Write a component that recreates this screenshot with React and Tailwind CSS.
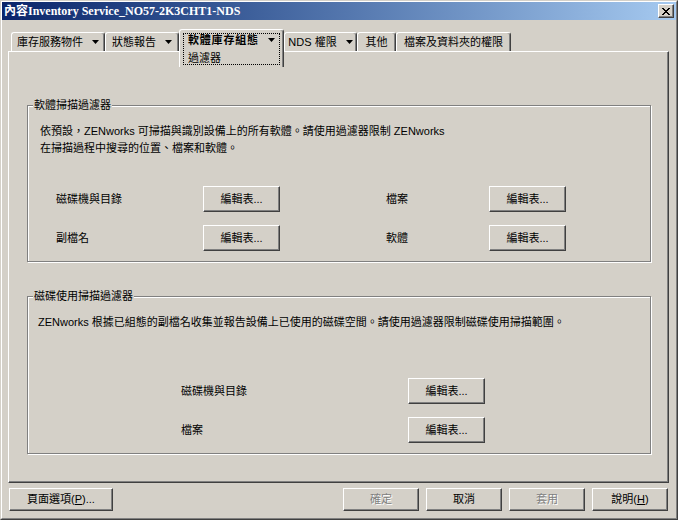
import React from 'react'

const Arrow = () => (
    <svg width="7" height="4" viewBox="0 0 7 4" className="shrink-0">
        <path d="M0 0h7L3.5 4z" fill="#000" />
    </svg>
)

// pixel X used by the title bar close button
const CloseGlyph = () => (
    <svg width="8" height="7" viewBox="0 0 8 7" shapeRendering="crispEdges">
        <rect x="0" y="0" width="2" height="1" fill="#000" />
        <rect x="6" y="0" width="2" height="1" fill="#000" />
        <rect x="1" y="1" width="2" height="1" fill="#000" />
        <rect x="5" y="1" width="2" height="1" fill="#000" />
        <rect x="2" y="2" width="4" height="1" fill="#000" />
        <rect x="3" y="3" width="2" height="1" fill="#000" />
        <rect x="2" y="4" width="4" height="1" fill="#000" />
        <rect x="1" y="5" width="2" height="1" fill="#000" />
        <rect x="5" y="5" width="2" height="1" fill="#000" />
        <rect x="0" y="6" width="2" height="1" fill="#000" />
        <rect x="6" y="6" width="2" height="1" fill="#000" />
    </svg>
)

const Btn = ({ className, disabled, children }) => (
    <div
        className={
            'flex items-center justify-center bg-[#d4d0c8] border border-white border-r-[#404040] border-b-[#404040] shadow-[inset_-1px_-1px_0_#808080] ' +
            className +
            (disabled ? ' text-[#808080] [text-shadow:1px_1px_0_#fff]' : '')
        }
    >
        {children}
    </div>
)

const Tab = ({ className, children }) => (
    <div
        className={
            'h-[19px] flex items-center justify-center gap-[9px] border-t border-l border-white border-r border-r-[#404040] rounded-t-[3px] shadow-[inset_-1px_0_0_#808080] leading-[17px] whitespace-nowrap ' +
            className
        }
    >
        {children}
    </div>
)

const GroupBox = ({ title, className, children }) => (
    <div
        className={
            'relative ml-[18px] w-[624px] border border-[#808080] shadow-[inset_1px_1px_0_#fff,1px_1px_0_#fff] ' +
            className
        }
    >
        <span className="absolute left-[5px] top-[-8px] px-[1px] bg-[#d4d0c8] leading-[15px]">{title}</span>
        {children}
    </div>
)

const App = () => {
    return (
        <div className="w-[678px] h-[520px] bg-[#d4d0c8] border border-[#d4d0c8] border-r-[#404040] border-b-[#404040] text-[11px] text-black font-['Liberation_Sans','Noto_Sans_CJK_TC',sans-serif]">
            <div className="h-full flex flex-col border border-white border-r-[#808080] border-b-[#808080]">
                {/* title bar */}
                <div className="h-[18px] shrink-0 flex items-center justify-between bg-linear-to-r from-[#0a246a] to-[#a6caf0]">
                    <span className="pl-[2px] text-white font-bold text-[12px] leading-none font-['Liberation_Serif','Noto_Sans_CJK_TC',serif] whitespace-nowrap">
                        內容Inventory Service_NO57-2K3CHT1-NDS
                    </span>
                    <Btn className="w-[16px] h-[14px] mr-[2px]">
                        <CloseGlyph />
                    </Btn>
                </div>

                <div className="flex-1 flex flex-col pl-[6px] pr-[7px]">
                    {/* tabs */}
                    <div className="mt-[9px] flex items-end pl-[3px]">
                        <Tab className="w-[94px]">
                            <span>庫存服務物件</span>
                            <Arrow />
                        </Tab>
                        <Tab className="w-[74px]">
                            <span>狀態報告</span>
                            <Arrow />
                        </Tab>
                        <div className="relative z-10 w-[105px] h-[38px] mb-[-16px] bg-[#d4d0c8] border-t border-l border-white border-r border-r-[#404040] rounded-t-[3px] shadow-[inset_-1px_0_0_#808080] pl-[8px] pt-[1px] leading-[18px] whitespace-nowrap">
                            <div className="flex items-center gap-[9px]">
                                <span className="font-bold tracking-[0.8px]">軟體庫存組態</span>
                                <Arrow />
                            </div>
                            <div>過濾器</div>
                            <span className="absolute left-[3px] top-[3px] w-[97px] h-[32px] border border-dotted border-black" />
                        </div>
                        <Tab className="w-[73px]">
                            <span>NDS 權限</span>
                            <Arrow />
                        </Tab>
                        <Tab className="w-[39px]">其他</Tab>
                        <Tab className="w-[115px]">檔案及資料夾的權限</Tab>
                    </div>

                    {/* tab page */}
                    <div className="h-[432px] flex flex-col border border-white border-r-[#404040] border-b-[#404040] shadow-[inset_-1px_-1px_0_#808080]">
                        <GroupBox title="軟體掃描過濾器" className="mt-[53px] h-[157px]">
                            <div className="pl-[12px] pt-[17px] leading-[17px] whitespace-nowrap">
                                依預設，ZENworks 可掃描與識別設備上的所有軟體。請使用過濾器限制 ZENworks
                                <br />
                                在掃描過程中搜尋的位置、檔案和軟體。
                            </div>
                            <div className="mt-[29px] flex items-center pl-[28px]">
                                <span className="w-[147px]">磁碟機與目錄</span>
                                <Btn className="w-[77px] h-[26px]">編輯表...</Btn>
                                <span className="ml-[106px] w-[103px]">檔案</span>
                                <Btn className="w-[77px] h-[26px]">編輯表...</Btn>
                            </div>
                            <div className="mt-[13px] flex items-center pl-[28px]">
                                <span className="w-[147px]">副檔名</span>
                                <Btn className="w-[77px] h-[26px]">編輯表...</Btn>
                                <span className="ml-[106px] w-[103px]">軟體</span>
                                <Btn className="w-[77px] h-[26px]">編輯表...</Btn>
                            </div>
                        </GroupBox>

                        <GroupBox title="磁碟使用掃描過濾器" className="mt-[34px] h-[158px]">
                            <div className="pl-[10px] pt-[17px] leading-[17px] whitespace-nowrap">
                                ZENworks 根據已組態的副檔名收集並報告設備上已使用的磁碟空間。請使用過濾器限制磁碟使用掃描範圍。
                            </div>
                            <div className="mt-[47px] flex items-center pl-[153px]">
                                <span className="w-[227px]">磁碟機與目錄</span>
                                <Btn className="w-[77px] h-[26px]">編輯表...</Btn>
                            </div>
                            <div className="mt-[13px] flex items-center pl-[153px]">
                                <span className="w-[227px]">檔案</span>
                                <Btn className="w-[77px] h-[26px]">編輯表...</Btn>
                            </div>
                        </GroupBox>
                    </div>

                    {/* dialog buttons */}
                    <div className="mt-[5px] flex justify-between pl-[1px] pr-[1px]">
                        <Btn className="w-[104px] h-[23px]">
                            頁面選項(<span className="underline">P</span>)...
                        </Btn>
                        <div className="flex gap-[7px]">
                            <Btn className="w-[76px] h-[23px]" disabled>確定</Btn>
                            <Btn className="w-[76px] h-[23px]">取消</Btn>
                            <Btn className="w-[76px] h-[23px]" disabled>套用</Btn>
                            <Btn className="w-[76px] h-[23px]">
                                說明(<span className="underline">H</span>)
                            </Btn>
                        </div>
                    </div>
                </div>
            </div>
        </div>
    )
}

export default App
